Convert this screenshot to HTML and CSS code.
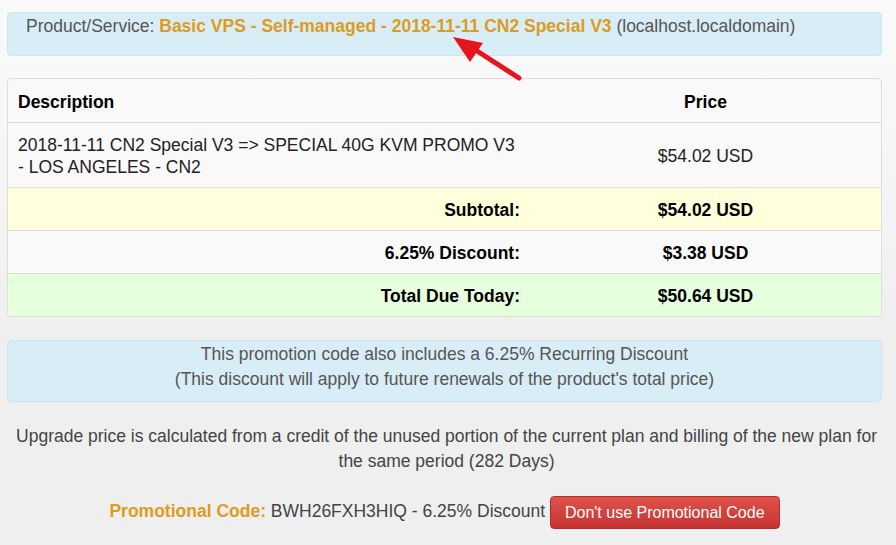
FILE: index.html
```html
<!DOCTYPE html>
<html>
<head>
<meta charset="utf-8">
<link rel="stylesheet" href="styles.css">
</head>
<body>
<div class="page">
  <div class="alert product">
    Product/Service: <strong class="accent">Basic VPS - Self-managed - 2018-11-11 CN2 Special V3</strong> (localhost.localdomain)
  </div>

  <table class="cart">
    <thead>
      <tr>
        <th class="desc">Description</th>
        <th class="price">Price</th>
      </tr>
    </thead>
    <tbody>
      <tr class="item">
        <td class="desc">2018-11-11 CN2 Special V3 =&gt; SPECIAL 40G KVM PROMO V3<br>- LOS ANGELES - CN2</td>
        <td class="price">$54.02 USD</td>
      </tr>
      <tr class="sum subtotal">
        <td class="label">Subtotal:</td>
        <td class="price">$54.02 USD</td>
      </tr>
      <tr class="sum discount">
        <td class="label">6.25% Discount:</td>
        <td class="price">$3.38 USD</td>
      </tr>
      <tr class="sum total">
        <td class="label">Total Due Today:</td>
        <td class="price">$50.64 USD</td>
      </tr>
    </tbody>
  </table>

  <div class="alert recurring">
    This promotion code also includes a 6.25% Recurring Discount<br>
    (This discount will apply to future renewals of the product's total price)
  </div>

  <p class="note">Upgrade price is calculated from a credit of the unused portion of the current plan and billing of the new plan for the same period (282 Days)</p>

  <div class="promo">
    <strong class="accent">Promotional Code:</strong> BWH26FXH3HIQ - 6.25% Discount
    <button class="btn-danger">Don't use Promotional Code</button>
  </div>
</div>

<svg class="arrow" width="896" height="545" viewBox="0 0 896 545">
  <line x1="519" y1="78" x2="474" y2="49" stroke="#e8141b" stroke-width="5" stroke-linecap="round"/>
  <polygon points="453,37 483,43 470,62" fill="#e8141b"/>
</svg>
</body>
</html>
```

FILE: styles.css
```css
html, body {
  margin: 0;
  padding: 0;
}
body {
  width: 896px;
  height: 545px;
  overflow: hidden;
  background: linear-gradient(#fafafa 0, #f7f7f7 120px, #efefef 330px, #efefef 100%);
  font-family: "Liberation Sans", Arial, sans-serif;
  font-size: 17.5px;
  color: #555;
  position: relative;
}
.page {
  padding: 12px 14px 0 7px;
}
.accent {
  color: #dc9c1e;
  font-weight: bold;
}
.alert {
  background: #d9edf7;
  border: 1px solid #c9e6f2;
  border-radius: 4px;
  color: #555;
}
.product {
  box-sizing: border-box;
  padding: 2px 18px 0;
  line-height: 22px;
  height: 44px;
}
.cart {
  width: 100%;
  table-layout: fixed;
  margin-top: 22px;
  border: 1px solid #dddddd;
  border-radius: 4px;
  border-spacing: 0;
  background: #f9f9f9;
  color: #111;
}
.cart th, .cart td {
  border-top: 1px solid #dddddd;
  padding: 0 10px;
  line-height: 22px;
  box-sizing: border-box;
}
.cart thead th {
  border-top: none;
  height: 43px;
  padding-top: 2px;
  font-weight: bold;
  color: #000;
}
.cart th.desc {
  text-align: left;
}
.cart .price {
  width: 351px;
  text-align: center;
}
.cart .item td {
  height: 65px;
  color: #222;
  padding-top: 2px;
}
.cart .item td.desc {
  vertical-align: top;
  padding-top: 11px;
}
.cart .sum td {
  height: 43px;
  padding-top: 2px;
  font-weight: bold;
  color: #000;
}
.cart .sum .label {
  text-align: right;
}
.cart .subtotal td {
  background: #ffffdb;
}
.cart .total td {
  background: #e6ffdc;
}
.cart .total td:first-child {
  border-bottom-left-radius: 4px;
}
.cart .total td:last-child {
  border-bottom-right-radius: 4px;
}
.recurring {
  margin-top: 23px;
  text-align: center;
  line-height: 25px;
  padding: 1px 10px 9px;
}
.note {
  margin: 22px 0 0;
  text-align: center;
  line-height: 25px;
  color: #444;
  padding-left: 4px;
}
.promo {
  margin-top: 22px;
  text-align: center;
  color: #444;
}
.btn-danger {
  font-family: inherit;
  font-size: 16px;
  color: #fff;
  background: linear-gradient(#e0524c, #c53330);
  border: 1px solid #b52b27;
  border-radius: 4px;
  padding: 6px 14px;
  line-height: 19px;
  vertical-align: middle;
}
.arrow {
  position: absolute;
  left: 0;
  top: 0;
  pointer-events: none;
}
```
